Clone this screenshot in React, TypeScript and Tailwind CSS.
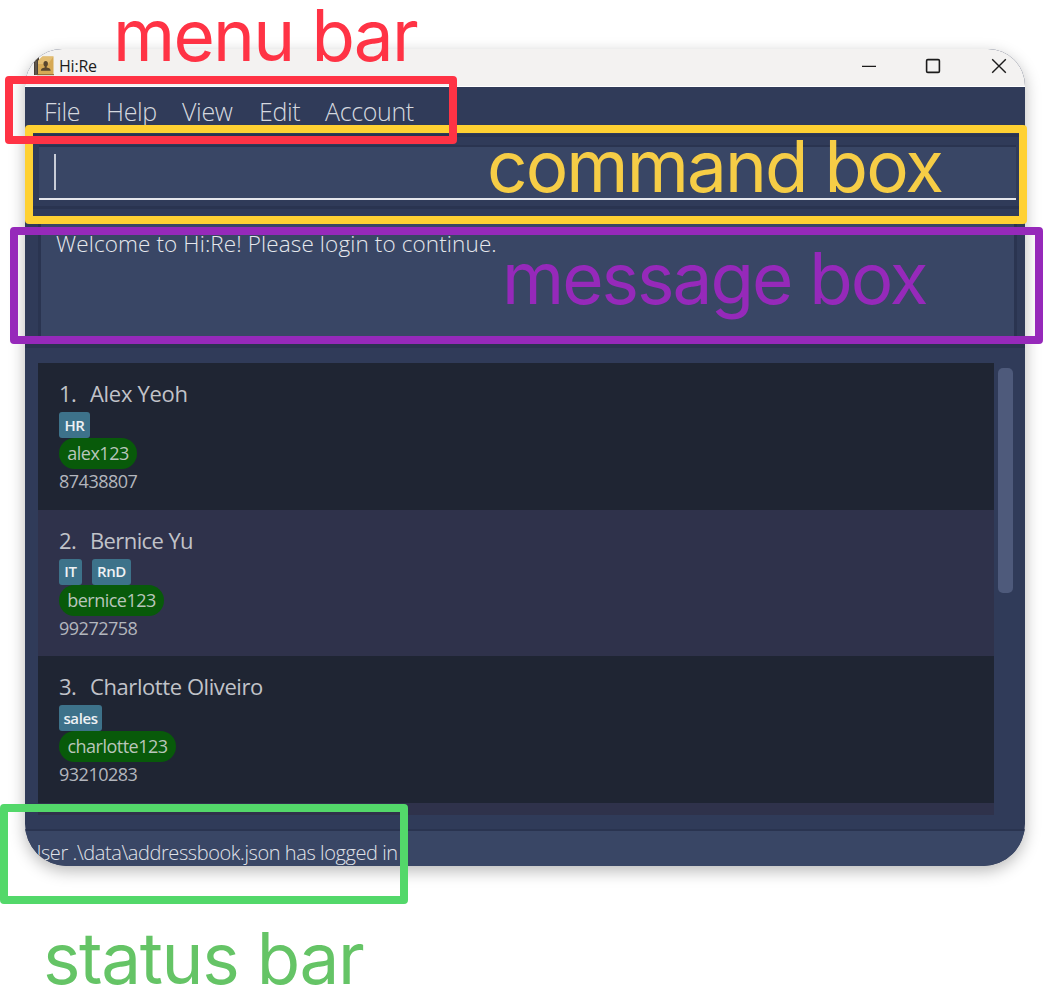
import type { ReactNode } from "react";

type Tag = { label: string; box: string };
type Person = {
  index: string;
  name: string;
  nameTracking: string;
  tags: Tag[];
  username: string;
  pill: string;
  phone: string;
};

const people: Person[] = [
  {
    index: "1.",
    name: "Alex Yeoh",
    nameTracking: "tracking-[-0.3px]",
    tags: [{ label: "HR", box: "w-[31px]" }],
    username: "alex123",
    pill: "w-[78px] tracking-[-0.5px]",
    phone: "87438807",
  },
  {
    index: "2.",
    name: "Bernice Yu",
    nameTracking: "tracking-[-0.6px]",
    tags: [
      { label: "IT", box: "w-[23px]" },
      { label: "RnD", box: "w-[39px]" },
    ],
    username: "bernice123",
    pill: "w-[105px] tracking-[-0.5px]",
    phone: "99272758",
  },
  {
    index: "3.",
    name: "Charlotte Oliveiro",
    nameTracking: "tracking-[-0.42px]",
    tags: [{ label: "sales", box: "w-[43px]" }],
    username: "charlotte123",
    pill: "w-[117px] tracking-[-0.5px]",
    phone: "93210283",
  },
];

const menus = [
  { label: "File", box: "w-[62px]" },
  { label: "Help", box: "w-[76px]" },
  { label: "View", box: "w-[77px]" },
  { label: "Edit", box: "w-[66px]" },
  { label: "Account", box: "w-[100px]" },
];

function AppIcon() {
  return (
    <svg width="20" height="20" viewBox="0 0 20 20" className="block">
      <path d="M0 6 L5 0.5 V19 H0 Z" fill="#4b4238" />
      <path d="M2 5 V19" stroke="#8b8072" strokeWidth="0.7" />
      <path d="M4 5 L8.5 0.5 H19.5 V18.7 H4 Z" fill="#d6a955" />
      <path d="M4 5 L8.5 0.5 H19.5 L14 8 H4 Z" fill="#e3bd72" />
      <path d="M3 18.7 H20" stroke="#85622d" strokeWidth="1" />
      <ellipse cx="11.7" cy="7.8" rx="2.2" ry="2.8" fill="#58452d" />
      <path d="M10.8 9 H12.6 V11.5 C15.5 12 16.5 12.5 16.7 14.8 H6.8 C7 12.5 8 12 10.8 11.5 Z" fill="#58452d" />
    </svg>
  );
}

function TitleBar() {
  return (
    <div className="flex h-[38px] shrink-0 items-start border-b border-white bg-[#f3f2f1]">
      <div className="ml-[9px] mt-[7px]">
        <AppIcon />
      </div>
      <span className="ml-[5px] mt-[6px] w-[60px] text-[16px] leading-[22px] tracking-[-0.2px] text-[#1c1c1c]">Hi:Re</span>
      <div className="ml-auto mr-[18px] mt-[9px] flex items-center text-[#1b1b1b]">
        <svg width="16" height="16" viewBox="0 0 16 16" className="mr-[48px]">
          <path d="M1 8.3 H15" stroke="currentColor" strokeWidth="1.3" />
        </svg>
        <svg width="16" height="16" viewBox="0 0 16 16" className="mr-[50px]">
          <rect x="1.6" y="1.6" width="12.8" height="12.8" rx="1.2" fill="none" stroke="currentColor" strokeWidth="1.6" />
        </svg>
        <svg width="16" height="16" viewBox="0 0 16 16">
          <path d="M1.2 1.2 L14.8 14.8 M14.8 1.2 L1.2 14.8" stroke="currentColor" strokeWidth="1.4" />
        </svg>
      </div>
    </div>
  );
}

function PersonCard({ person, shade }: { person: Person; shade: string }) {
  return (
    <div className={`h-[146.7px] shrink-0 pl-[21px] pt-[14px] ${shade}`}>
      <div className="mb-[2px] flex h-[33px] items-center text-[22px] text-[#c1c3c9]">
        <span className="w-[31px] tracking-[-0.5px]">{person.index}</span>
        <span className={`whitespace-nowrap ${person.nameTracking}`}>{person.name}</span>
      </div>
      <div className="flex h-[26px] gap-[10px]">
        {person.tags.map((t) => (
          <span
            key={t.label}
            className={`flex h-[26px] items-center justify-center rounded-[3px] bg-[#3d728a] text-[15px] font-semibold tracking-[-0.4px] text-[#eef1f4] ${t.box}`}
          >
            {t.label}
          </span>
        ))}
      </div>
      <div className={`flex h-[31px] items-center justify-center rounded-full bg-[#085a0a] text-[18px] leading-[29px] text-[#b9c6bb] ${person.pill}`}>
        {person.username}
      </div>
      <div className="text-[18px] leading-[24px] tracking-[-0.5px] text-[#b3b6bd]">{person.phone}</div>
    </div>
  );
}

function Frame({ className }: { className: string }) {
  return <div className={`absolute rounded-[4px] border-[8px] ${className}`} />;
}

function Caption({ className, children }: { className: string; children: ReactNode }) {
  return (
    <div className={`absolute whitespace-nowrap font-['Inter',sans-serif] text-[71px] leading-[70px] ${className}`}>
      {children}
    </div>
  );
}

export default function App() {
  return (
    <div className="relative h-[1006px] w-[1058px] overflow-hidden bg-white pl-[25px] pt-[49px] font-['Open_Sans','Noto_Sans',sans-serif]">
      <div className="flex h-[817px] w-[1000px] flex-col overflow-hidden rounded-b-[42px] rounded-t-[37px] bg-[#303b59] shadow-[0_5px_16px_rgba(0,0,0,0.28)]">
        <TitleBar />

        <nav className="flex h-[47px] shrink-0 items-center pl-[19px] pt-[2px] text-[25px] font-light tracking-[-0.35px] text-[#d5d8df]">
          {menus.map((m) => (
            <span key={m.label} className={`whitespace-nowrap ${m.box}`}>
              {m.label}
            </span>
          ))}
        </nav>

        <section className="h-[75px] shrink-0 border-b-[3px] border-t-[3px] border-[#2a3450] pl-[14px] pr-[9px] pt-[8px]">
          <div className="h-[55px] border-b-2 border-t-2 border-b-[#e4e6ec] border-t-[#2a3450] bg-[#394665] pl-[15px] pt-[7px]">
            <div className="h-[36px] w-[2px] bg-[#c9cdd7]" />
          </div>
        </section>

        <section className="mt-[15px] h-[124px] shrink-0 border-b-[4px] border-[#2a3450] pl-[13px] pr-[8px]">
          <div className="h-[120px] border-x-[3px] border-[#2a3450] bg-[#394665] pl-[15px] pt-[4px] text-[22.5px] font-light leading-[32px] text-[#e6e8ed]">
            <span className="whitespace-nowrap tracking-[0.12px]">Welcome to Hi:Re! Please login to continue.</span>
          </div>
        </section>

        <section className="flex h-[481px] shrink-0 pl-[13px] pt-[15px]">
          <div className="flex h-[452px] w-[956px] flex-col overflow-hidden">
            {people.map((p, i) => (
              <PersonCard key={p.index} person={p} shade={i % 2 === 0 ? "bg-[#1f2533]" : "bg-[#2f324b]"} />
            ))}
            <div className="h-[20px] shrink-0 bg-[#2f324b]" />
          </div>
          <div className="ml-[4px] mt-[5px] h-[225px] w-[15px] rounded-[5px] bg-[#4e5a7b]" />
        </section>

        <footer className="h-[37px] shrink-0 border-t-2 border-[#2a3450] bg-[#394665] pl-[2px] pt-[8px] text-[20px] font-light leading-[28px] text-[#e0e3e9]">
          <span className="whitespace-nowrap tracking-[-0.42px]">User .\data\addressbook.json has logged in</span>
        </footer>
      </div>

      <Frame className="left-[25px] top-[125px] h-[99px] w-[1002px] border-[#ffd133]" />
      <Frame className="left-[5px] top-[76px] h-[68px] w-[452px] border-[#ff3345]" />
      <Frame className="left-[10px] top-[227px] h-[117px] w-[1033px] border-[#9629ba]" />
      <Frame className="left-0 top-[804px] h-[100px] w-[408px] border-[#53d86a]" />

      <Caption className="left-[113px] top-0 tracking-[-1.8px] text-[#ff3345]">menu bar</Caption>
      <Caption className="left-[487px] top-[131px] tracking-[-1.9px] text-[#f6cd46]">command box</Caption>
      <Caption className="left-[502px] top-[243px] tracking-[-2px] text-[#9629ba]">message box</Caption>
      <Caption className="left-[43px] top-[923px] tracking-[-1.4px] text-[#65c466]">status bar</Caption>
    </div>
  );
}
